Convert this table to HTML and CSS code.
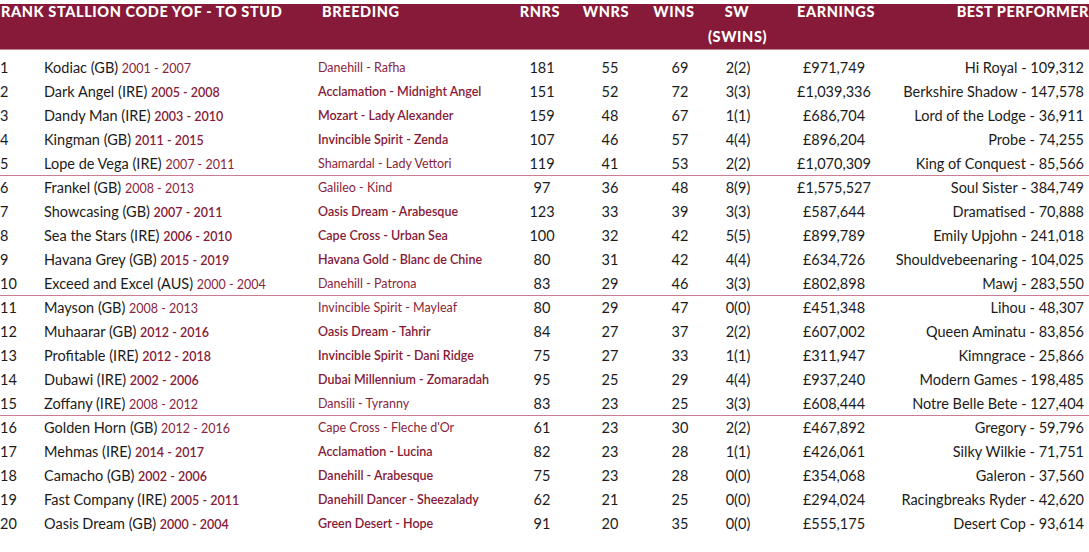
FILE: index.html
```html
<!DOCTYPE html>
<html lang="en">
<head>
<meta charset="utf-8">
<title>Leading First-Season Sires</title>
<link rel="stylesheet" href="styles.css">
</head>
<body>
<div class="sheet">
  <div class="head">
    <div class="hrow">
      <div class="h-rank">RANK STALLION CODE YOF - TO STUD</div>
      <div class="h-breed">BREEDING</div>
      <div class="h-num">RNRS</div>
      <div class="h-num">WNRS</div>
      <div class="h-num">WINS</div>
      <div class="h-num">SW<br>(SWINS)</div>
      <div class="h-num">EARNINGS</div>
      <div class="h-best">BEST PERFORMER</div>
    </div>
  </div>

  <div class="group">
    <div class="row"><span class="c-rank">1</span><span class="c-name">Kodiac (GB) <span class="yr">2001 - 2007</span></span><span class="c-breed">Danehill - Rafha</span><span class="c-num">181</span><span class="c-num">55</span><span class="c-num">69</span><span class="c-num">2(2)</span><span class="c-num">£971,749</span><span class="c-best">Hi Royal - 109,312</span></div>
    <div class="row strong"><span class="c-rank">2</span><span class="c-name">Dark Angel (IRE) <span class="yr">2005 - 2008</span></span><span class="c-breed">Acclamation - Midnight Angel</span><span class="c-num">151</span><span class="c-num">52</span><span class="c-num">72</span><span class="c-num">3(3)</span><span class="c-num">£1,039,336</span><span class="c-best">Berkshire Shadow - 147,578</span></div>
    <div class="row strong"><span class="c-rank">3</span><span class="c-name">Dandy Man (IRE) <span class="yr">2003 - 2010</span></span><span class="c-breed">Mozart - Lady Alexander</span><span class="c-num">159</span><span class="c-num">48</span><span class="c-num">67</span><span class="c-num">1(1)</span><span class="c-num">£686,704</span><span class="c-best">Lord of the Lodge - 36,911</span></div>
    <div class="row strong"><span class="c-rank">4</span><span class="c-name">Kingman (GB) <span class="yr">2011 - 2015</span></span><span class="c-breed">Invincible Spirit - Zenda</span><span class="c-num">107</span><span class="c-num">46</span><span class="c-num">57</span><span class="c-num">4(4)</span><span class="c-num">£896,204</span><span class="c-best">Probe - 74,255</span></div>
    <div class="row last"><span class="c-rank">5</span><span class="c-name">Lope de Vega (IRE) <span class="yr">2007 - 2011</span></span><span class="c-breed">Shamardal - Lady Vettori</span><span class="c-num">119</span><span class="c-num">41</span><span class="c-num">53</span><span class="c-num">2(2)</span><span class="c-num">£1,070,309</span><span class="c-best">King of Conquest - 85,566</span></div>
  </div>

  <div class="group">
    <div class="row"><span class="c-rank">6</span><span class="c-name">Frankel (GB) <span class="yr">2008 - 2013</span></span><span class="c-breed">Galileo - Kind</span><span class="c-num">97</span><span class="c-num">36</span><span class="c-num">48</span><span class="c-num">8(9)</span><span class="c-num">£1,575,527</span><span class="c-best">Soul Sister - 384,749</span></div>
    <div class="row strong"><span class="c-rank">7</span><span class="c-name">Showcasing (GB) <span class="yr">2007 - 2011</span></span><span class="c-breed">Oasis Dream - Arabesque</span><span class="c-num">123</span><span class="c-num">33</span><span class="c-num">39</span><span class="c-num">3(3)</span><span class="c-num">£587,644</span><span class="c-best">Dramatised - 70,888</span></div>
    <div class="row strong"><span class="c-rank">8</span><span class="c-name">Sea the Stars (IRE) <span class="yr">2006 - 2010</span></span><span class="c-breed">Cape Cross - Urban Sea</span><span class="c-num">100</span><span class="c-num">32</span><span class="c-num">42</span><span class="c-num">5(5)</span><span class="c-num">£899,789</span><span class="c-best">Emily Upjohn - 241,018</span></div>
    <div class="row strong"><span class="c-rank">9</span><span class="c-name">Havana Grey (GB) <span class="yr">2015 - 2019</span></span><span class="c-breed">Havana Gold - Blanc de Chine</span><span class="c-num">80</span><span class="c-num">31</span><span class="c-num">42</span><span class="c-num">4(4)</span><span class="c-num">£634,726</span><span class="c-best">Shouldvebeenaring - 104,025</span></div>
    <div class="row last"><span class="c-rank">10</span><span class="c-name">Exceed and Excel (AUS) <span class="yr">2000 - 2004</span></span><span class="c-breed">Danehill - Patrona</span><span class="c-num">83</span><span class="c-num">29</span><span class="c-num">46</span><span class="c-num">3(3)</span><span class="c-num">£802,898</span><span class="c-best">Mawj - 283,550</span></div>
  </div>

  <div class="group">
    <div class="row"><span class="c-rank">11</span><span class="c-name">Mayson (GB) <span class="yr">2008 - 2013</span></span><span class="c-breed">Invincible Spirit - Mayleaf</span><span class="c-num">80</span><span class="c-num">29</span><span class="c-num">47</span><span class="c-num">0(0)</span><span class="c-num">£451,348</span><span class="c-best">Lihou - 48,307</span></div>
    <div class="row strong"><span class="c-rank">12</span><span class="c-name">Muhaarar (GB) <span class="yr">2012 - 2016</span></span><span class="c-breed">Oasis Dream - Tahrir</span><span class="c-num">84</span><span class="c-num">27</span><span class="c-num">37</span><span class="c-num">2(2)</span><span class="c-num">£607,002</span><span class="c-best">Queen Aminatu - 83,856</span></div>
    <div class="row strong"><span class="c-rank">13</span><span class="c-name">Profitable (IRE) <span class="yr">2012 - 2018</span></span><span class="c-breed">Invincible Spirit - Dani Ridge</span><span class="c-num">75</span><span class="c-num">27</span><span class="c-num">33</span><span class="c-num">1(1)</span><span class="c-num">£311,947</span><span class="c-best">Kimngrace - 25,866</span></div>
    <div class="row strong"><span class="c-rank">14</span><span class="c-name">Dubawi (IRE) <span class="yr">2002 - 2006</span></span><span class="c-breed">Dubai Millennium - Zomaradah</span><span class="c-num">95</span><span class="c-num">25</span><span class="c-num">29</span><span class="c-num">4(4)</span><span class="c-num">£937,240</span><span class="c-best">Modern Games - 198,485</span></div>
    <div class="row last"><span class="c-rank">15</span><span class="c-name">Zoffany (IRE) <span class="yr">2008 - 2012</span></span><span class="c-breed">Dansili - Tyranny</span><span class="c-num">83</span><span class="c-num">23</span><span class="c-num">25</span><span class="c-num">3(3)</span><span class="c-num">£608,444</span><span class="c-best">Notre Belle Bete - 127,404</span></div>
  </div>

  <div class="group">
    <div class="row"><span class="c-rank">16</span><span class="c-name">Golden Horn (GB) <span class="yr">2012 - 2016</span></span><span class="c-breed">Cape Cross - Fleche d'Or</span><span class="c-num">61</span><span class="c-num">23</span><span class="c-num">30</span><span class="c-num">2(2)</span><span class="c-num">£467,892</span><span class="c-best">Gregory - 59,796</span></div>
    <div class="row strong"><span class="c-rank">17</span><span class="c-name">Mehmas (IRE) <span class="yr">2014 - 2017</span></span><span class="c-breed">Acclamation - Lucina</span><span class="c-num">82</span><span class="c-num">23</span><span class="c-num">28</span><span class="c-num">1(1)</span><span class="c-num">£426,061</span><span class="c-best">Silky Wilkie - 71,751</span></div>
    <div class="row strong"><span class="c-rank">18</span><span class="c-name">Camacho (GB) <span class="yr">2002 - 2006</span></span><span class="c-breed">Danehill - Arabesque</span><span class="c-num">75</span><span class="c-num">23</span><span class="c-num">28</span><span class="c-num">0(0)</span><span class="c-num">£354,068</span><span class="c-best">Galeron - 37,560</span></div>
    <div class="row strong"><span class="c-rank">19</span><span class="c-name">Fast Company (IRE) <span class="yr">2005 - 2011</span></span><span class="c-breed">Danehill Dancer - Sheezalady</span><span class="c-num">62</span><span class="c-num">21</span><span class="c-num">25</span><span class="c-num">0(0)</span><span class="c-num">£294,024</span><span class="c-best">Racingbreaks Ryder - 42,620</span></div>
    <div class="row strong"><span class="c-rank">20</span><span class="c-name">Oasis Dream (GB) <span class="yr">2000 - 2004</span></span><span class="c-breed">Green Desert - Hope</span><span class="c-num">91</span><span class="c-num">20</span><span class="c-num">35</span><span class="c-num">0(0)</span><span class="c-num">£555,175</span><span class="c-best">Desert Cop - 93,614</span></div>
  </div>
</div>
</body>
</html>
```
FILE: styles.css
```css
html, body {
  margin: 0;
  padding: 0;
  background: #ffffff;
}

body {
  font-family: Lato, "Noto Sans", "Liberation Sans", sans-serif;
  color: #1b1b1b;
  width: 1089px;
  height: 552px;
  overflow: hidden;
}

.sheet {
  padding-top: 4px;
}

.head {
  display: flow-root;
  background: #861a38;
  height: 46px;
  border-bottom: 1px solid #c27f91;
  box-sizing: border-box;
}

.hrow {
  display: grid;
  grid-template-columns: 322px 186px 64px 68px 68px 58px 140px 183px;
  color: #ffffff;
  font-weight: 900;
  font-size: 14.5px;
  letter-spacing: 0.6px;
  line-height: 25px;
  margin-top: -5px;
  white-space: nowrap;
}

.h-rank {
  padding-left: 1px;
}

.h-num {
  text-align: center;
}

.h-best {
  text-align: right;
  letter-spacing: 0.5px;
}

.group {
  border-bottom: 1px solid #c97d93;
  padding-bottom: 2px;
}

.head + .group {
  padding-top: 6px;
}

.group:last-child {
  border-bottom: none;
}

.row {
  display: grid;
  grid-template-columns: 44px 274px 190px 68px 68px 72px 44px 148px 176px;
  height: 24px;
  line-height: 24px;
  font-size: 14.5px;
  white-space: nowrap;
}

.row.last {
  height: 21px;
}

.c-num {
  display: flex;
  justify-content: center;
}

.c-best {
  display: flex;
  justify-content: flex-end;
}

.yr,
.c-breed {
  color: #8a1f40;
  font-size: 12.5px;
  font-weight: 400;
}

.strong .yr,
.strong .c-breed {
  font-weight: 600;
  color: #861a38;
}
```
